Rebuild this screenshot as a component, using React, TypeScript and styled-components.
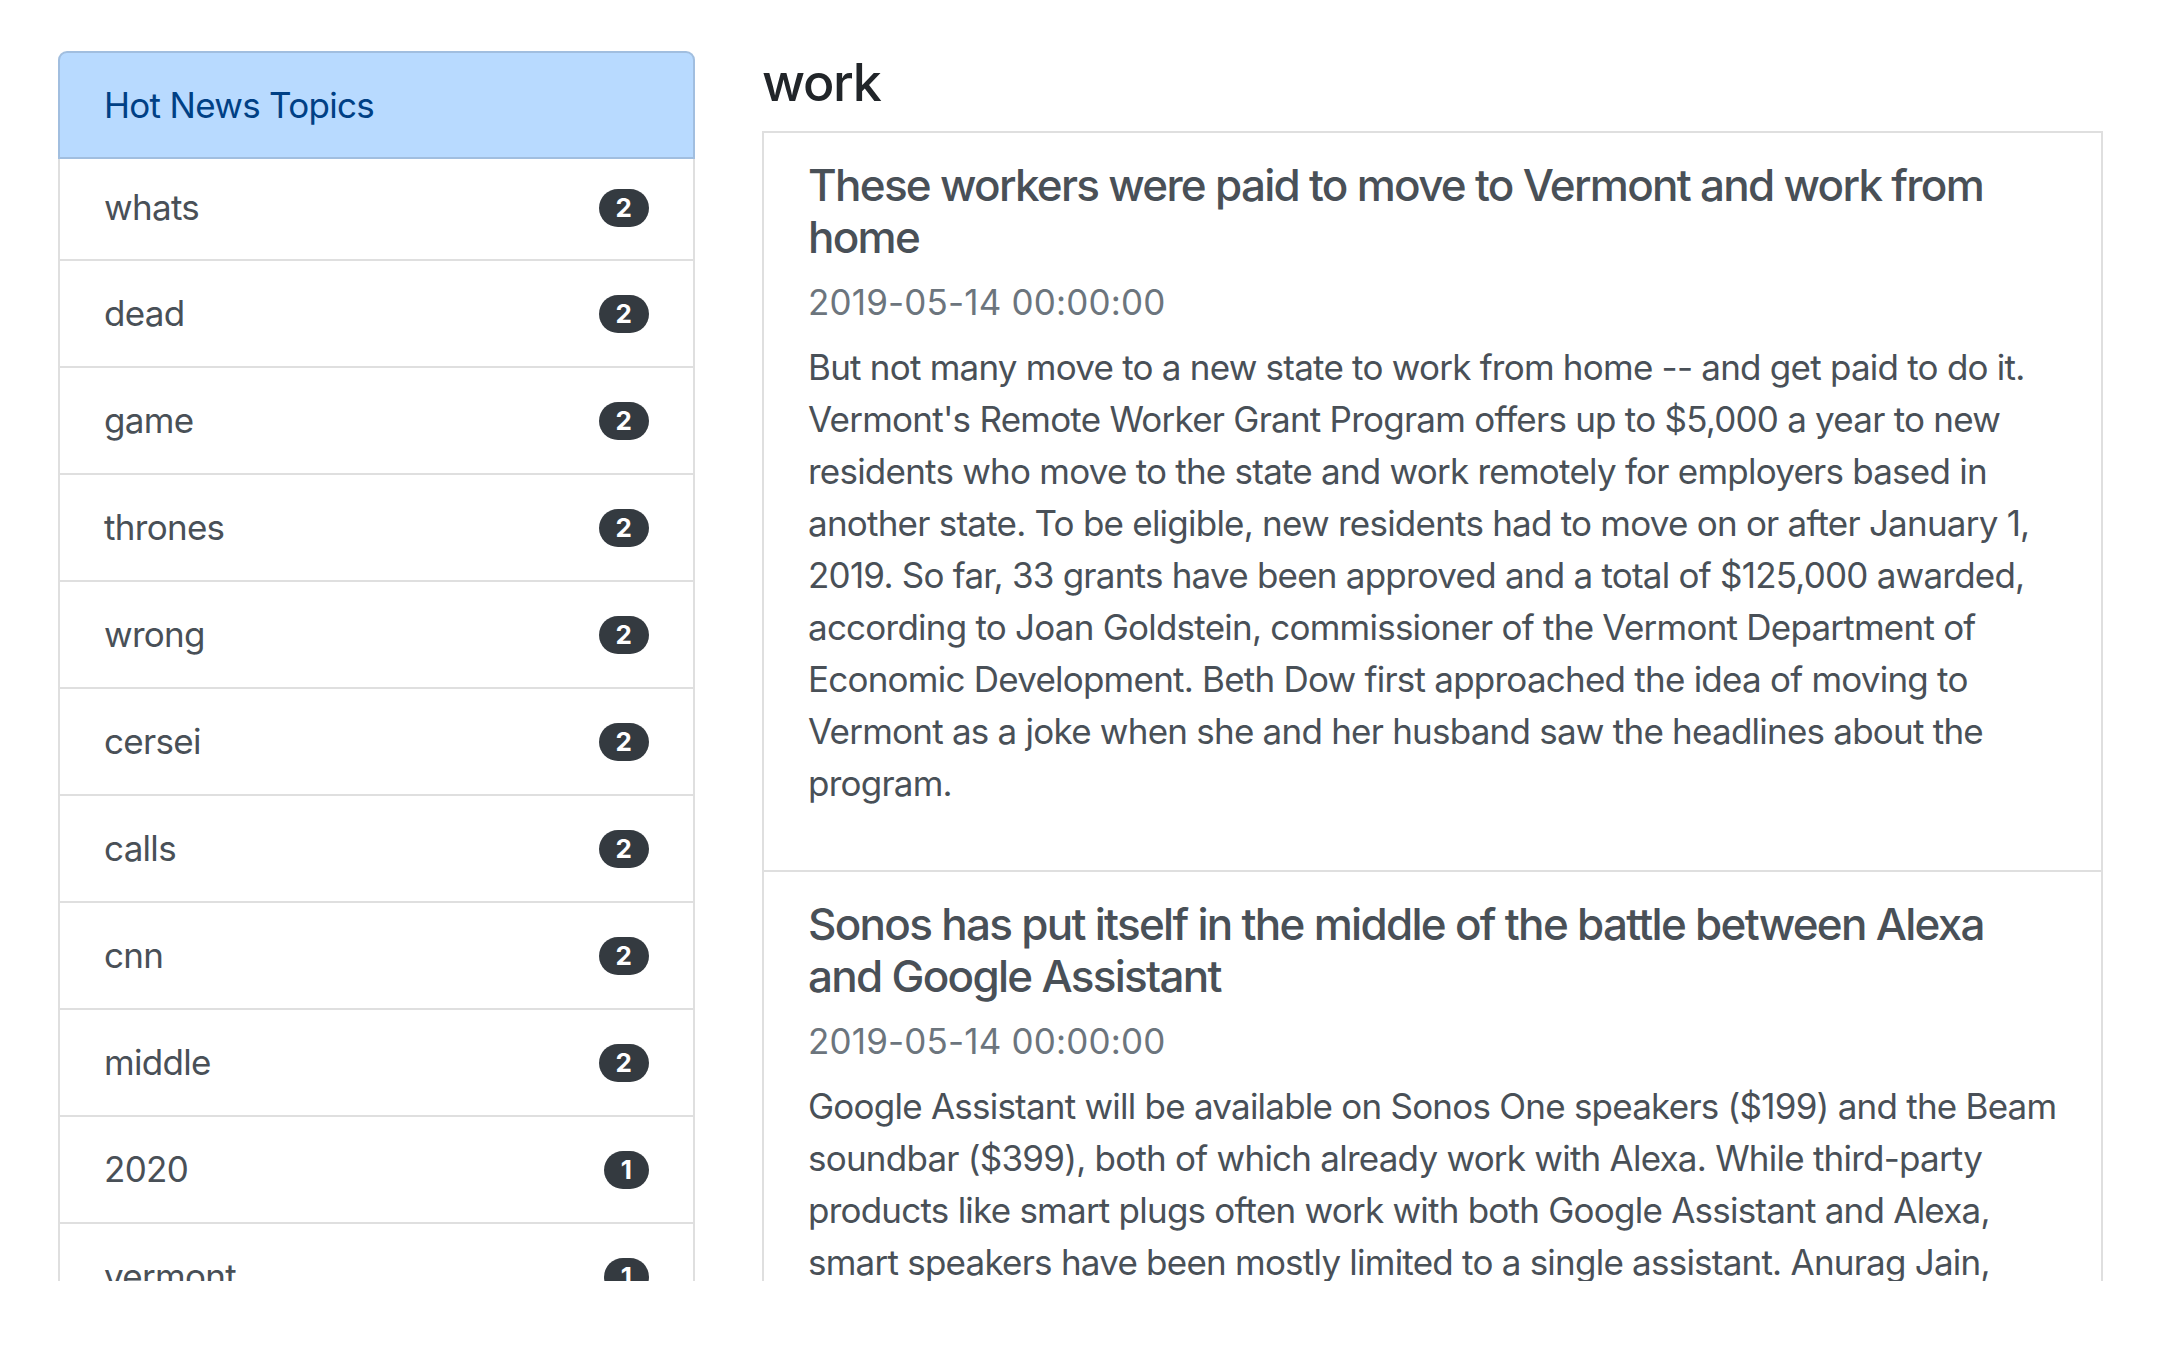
import React from "react";
import styled, { createGlobalStyle } from "styled-components";

const GlobalStyle = createGlobalStyle`
  html, body {
    margin: 0;
    padding: 0;
    background: #ffffff;
  }
  body {
    font-family: Inter, "Noto Sans", "Liberation Sans", sans-serif;
    color: #212529;
    -webkit-font-smoothing: antialiased;
  }
  *, *::before, *::after {
    box-sizing: border-box;
  }
`;

const Viewport = styled.div`
  height: 1281px;
  overflow: hidden;
`;

const Layout = styled.div`
  display: flex;
  align-items: flex-start;
  gap: 67px;
  padding: 51px 65px 0 58px;
`;

const Sidebar = styled.ul`
  list-style: none;
  margin: 0;
  padding: 0;
  width: 637px;
  flex: none;
  display: flex;
  flex-direction: column;
`;

const SidebarHeader = styled.li`
  background: #b8daff;
  color: #004085;
  border: 2px solid rgba(0, 0, 0, 0.125);
  border-radius: 9px 9px 0 0;
  padding: 26px 44px 25px;
  font-size: 35px;
  line-height: 53px;
  letter-spacing: -0.02em;
`;

const TopicRow = styled.li<{ $first?: boolean }>`
  display: flex;
  justify-content: space-between;
  align-items: center;
  border: 2px solid rgba(0, 0, 0, 0.125);
  border-top: 0;
  padding: ${(p) => (p.$first ? "22px 44px 25px" : "26px 44px")};
  font-size: 35px;
  line-height: 53px;
  color: #495057;
  letter-spacing: -0.02em;
`;

const Badge = styled.span`
  display: inline-flex;
  align-items: center;
  justify-content: center;
  height: 38px;
  padding: 0 17px;
  border-radius: 19px;
  background: #343a40;
  color: #ffffff;
  font-size: 26px;
  font-weight: 700;
  line-height: 1;
  letter-spacing: 0;
`;

const Main = styled.main`
  width: 1341px;
  flex: none;
`;

const TopicHeading = styled.h4`
  margin: 1px 0 17px;
  font-size: 52px;
  line-height: 62px;
  font-weight: 500;
  color: #212529;
  letter-spacing: -0.025em;
`;

const ArticleList = styled.div`
  display: flex;
  flex-direction: column;
`;

const ArticleItem = styled.article`
  border: 2px solid rgba(0, 0, 0, 0.125);
  padding: 26px 44px 25px;
  color: #495057;
  & + & {
    border-top: 0;
  }
`;

const ArticleTitle = styled.h5`
  margin: 0 0 18px;
  font-size: 44px;
  line-height: 52px;
  font-weight: 500;
  letter-spacing: -0.039em;
  white-space: nowrap;
`;

const ArticleDate = styled.h6`
  margin: 0 0 18px;
  font-size: 35px;
  line-height: 42px;
  font-weight: 400;
  color: #6c757d;
  letter-spacing: 0.005em;
`;

const ArticleBody = styled.p`
  margin: 0 0 36px;
  font-size: 35px;
  line-height: 52px;
  letter-spacing: -0.022em;
  white-space: nowrap;
`;

type Topic = { name: string; count: number };

const topics: Topic[] = [
  { name: "whats", count: 2 },
  { name: "dead", count: 2 },
  { name: "game", count: 2 },
  { name: "thrones", count: 2 },
  { name: "wrong", count: 2 },
  { name: "cersei", count: 2 },
  { name: "calls", count: 2 },
  { name: "cnn", count: 2 },
  { name: "middle", count: 2 },
  { name: "2020", count: 1 },
  { name: "vermont", count: 1 },
  { name: "sonos", count: 1 },
];

type Article = { title: string[]; date: string; body: string[] };

const articles: Article[] = [
  {
    title: ["These workers were paid to move to Vermont and work from", "home"],
    date: "2019-05-14 00:00:00",
    body: [
      "But not many move to a new state to work from home -- and get paid to do it.",
      "Vermont's Remote Worker Grant Program offers up to $5,000 a year to new",
      "residents who move to the state and work remotely for employers based in",
      "another state. To be eligible, new residents had to move on or after January 1,",
      "2019. So far, 33 grants have been approved and a total of $125,000 awarded,",
      "according to Joan Goldstein, commissioner of the Vermont Department of",
      "Economic Development. Beth Dow first approached the idea of moving to",
      "Vermont as a joke when she and her husband saw the headlines about the",
      "program.",
    ],
  },
  {
    title: ["Sonos has put itself in the middle of the battle between Alexa", "and Google Assistant"],
    date: "2019-05-14 00:00:00",
    body: [
      "Google Assistant will be available on Sonos One speakers ($199) and the Beam",
      "soundbar ($399), both of which already work with Alexa. While third-party",
      "products like smart plugs often work with both Google Assistant and Alexa,",
      "smart speakers have been mostly limited to a single assistant. Anurag Jain,",
      "Google's director of product management, said the company is excited.",
    ],
  },
];

function Lines({ lines }: { lines: string[] }) {
  return (
    <>
      {lines.map((line, i) => (
        <React.Fragment key={i}>
          {line}
          {i < lines.length - 1 && <br />}
        </React.Fragment>
      ))}
    </>
  );
}

export default function App() {
  return (
    <>
      <GlobalStyle />
      <Viewport>
        <Layout>
          <Sidebar>
            <SidebarHeader>Hot News Topics</SidebarHeader>
            {topics.map((t, i) => (
              <TopicRow key={t.name} $first={i === 0}>
                <span>{t.name}</span>
                <Badge>{t.count}</Badge>
              </TopicRow>
            ))}
          </Sidebar>
          <Main>
            <TopicHeading>work</TopicHeading>
            <ArticleList>
              {articles.map((a, i) => (
                <ArticleItem key={i}>
                  <ArticleTitle>
                    <Lines lines={a.title} />
                  </ArticleTitle>
                  <ArticleDate>{a.date}</ArticleDate>
                  <ArticleBody>
                    <Lines lines={a.body} />
                  </ArticleBody>
                </ArticleItem>
              ))}
            </ArticleList>
          </Main>
        </Layout>
      </Viewport>
    </>
  );
}
